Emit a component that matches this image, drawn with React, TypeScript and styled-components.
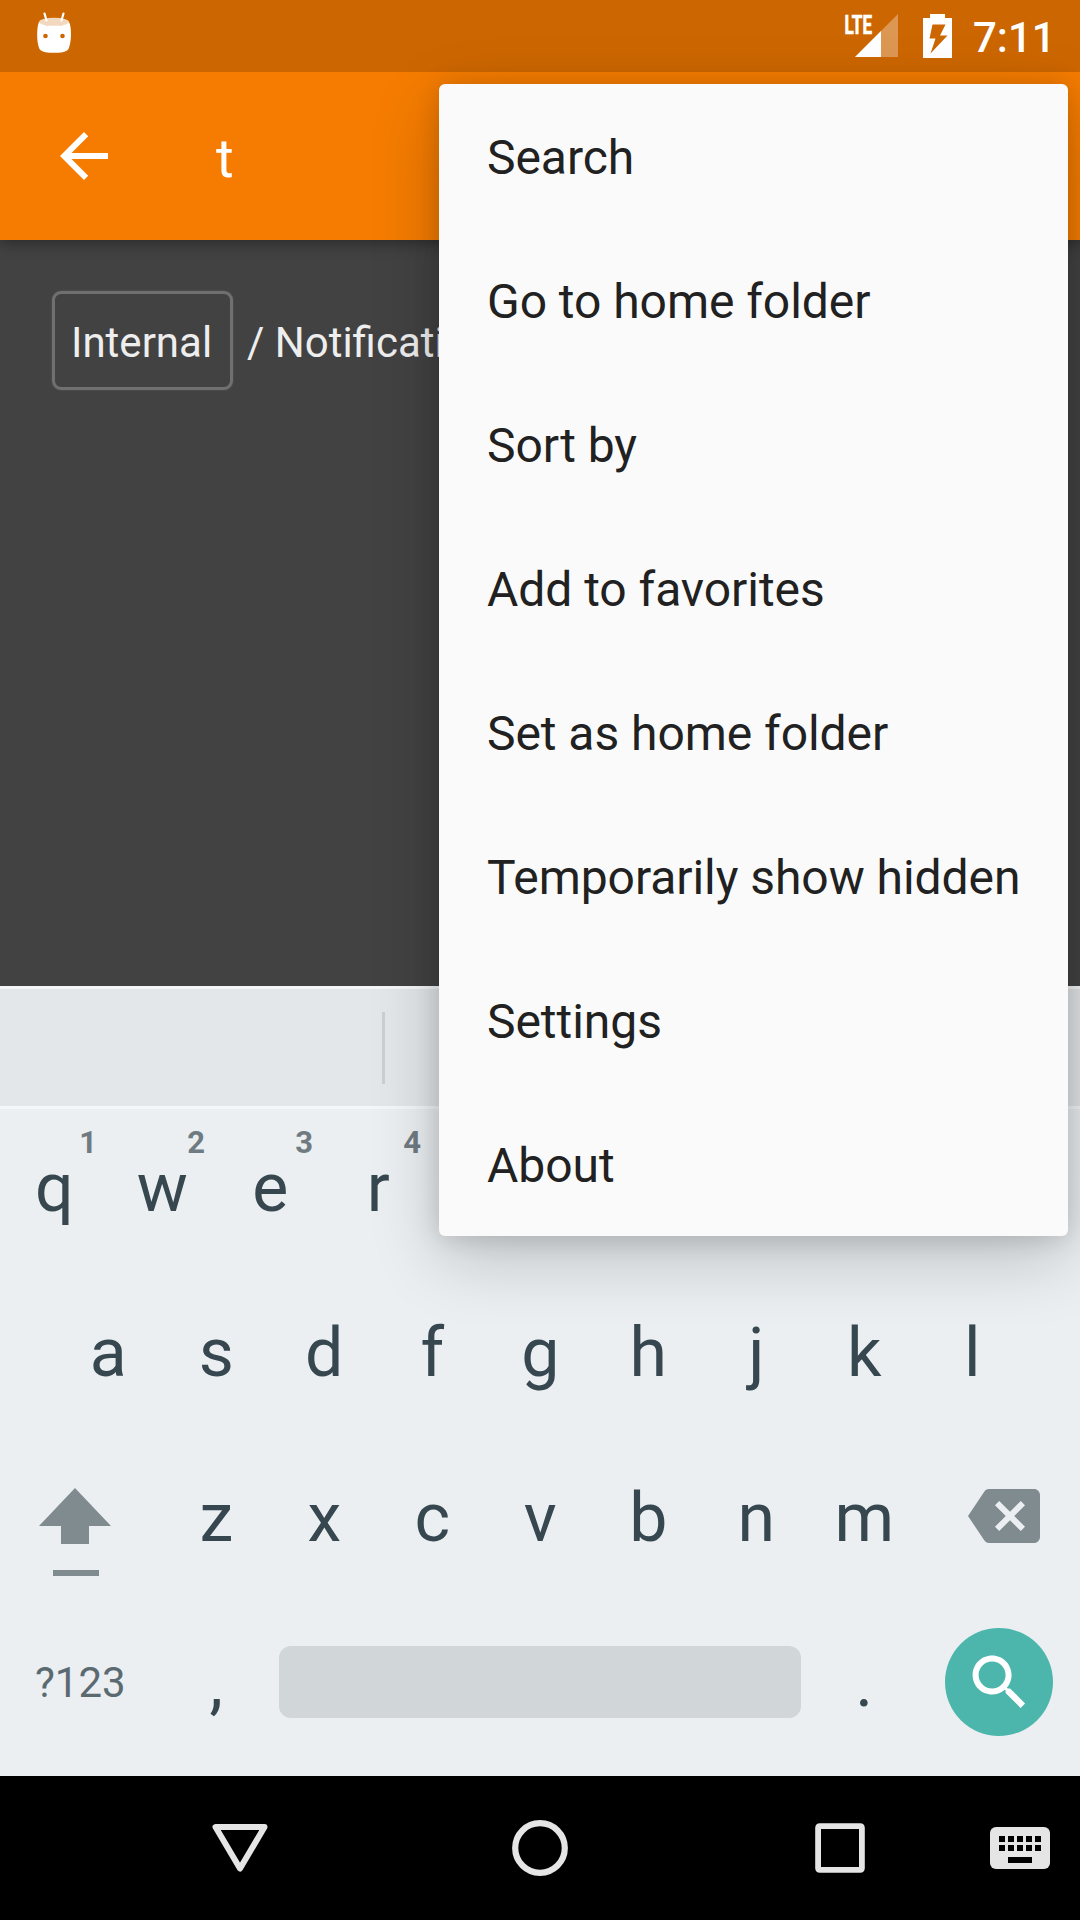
import React from "react";
import styled, { createGlobalStyle } from "styled-components";

const GlobalStyle = createGlobalStyle`
  *, *::before, *::after { box-sizing: border-box; }
  body {
    margin: 0;
    font-family: Roboto, "Noto Sans", sans-serif;
    font-kerning: normal;
  }
  svg { display: block; flex: none; }
`;

const Screen = styled.div`
  position: relative;
  display: flex;
  flex-direction: column;
  width: 1080px;
  height: 1920px;
  overflow: hidden;
  background: #424242;
`;

const StatusBar = styled.header`
  position: relative;
  z-index: 1;
  display: flex;
  align-items: center;
  height: 72px;
  flex: none;
  padding: 0 31px 0 36px;
  background: #cc6600;
  color: #fff;
`;

const StatusIcons = styled.div`
  display: flex;
  align-items: center;
  margin-left: auto;
`;

const Clock = styled.span`
  width: 76px;
  margin-left: 21px;
  padding-top: 3px;
  font-size: 42px;
  font-weight: 500;
  line-height: 72px;
  white-space: nowrap;
`;

const Toolbar = styled.div`
  display: flex;
  align-items: center;
  height: 168px;
  flex: none;
  padding-left: 48px;
  background: #f57c00;
  box-shadow: 0 3px 14px rgba(0, 0, 0, 0.38);
`;

const Query = styled.span`
  margin-left: 96px;
  padding-top: 5px;
  color: #fff;
  font-size: 54px;
  line-height: 64px;
`;

const Content = styled.main`
  flex: 1;
  min-height: 0;
  padding: 51px 0 0 52px;
  overflow: hidden;
`;

const Breadcrumbs = styled.nav`
  display: flex;
  align-items: center;
  height: 99px;
  color: #eee;
  font-size: 42px;
  line-height: 50px;
  white-space: nowrap;
`;

const Crumb = styled.span<{ $boxed?: boolean }>`
  display: flex;
  align-items: center;
  height: 99px;
  padding: ${(p) => (p.$boxed ? "4px 0 0 16px" : "4px 0 0 14px")};
  width: ${(p) => (p.$boxed ? "181px" : "auto")};
  border: ${(p) => (p.$boxed ? "3px solid #707070" : "0 solid transparent")};
  border-radius: 9px;
  box-shadow: ${(p) => (p.$boxed ? "0 0 2px rgba(255, 255, 255, 0.16)" : "none")};
`;

const Suggestions = styled.div`
  display: flex;
  align-items: center;
  height: 123px;
  flex: none;
  border-top: 3px solid #f4f6f7;
  border-bottom: 3px solid #f4f6f7;
  background: #e3e7e9;
`;

const Suggestion = styled.div`
  width: 385px;
  height: 72px;
  margin-top: 1px;
  border-right: 3px solid #cacfd1;
`;

const Keyboard = styled.section`
  display: flex;
  flex-direction: column;
  height: 667px;
  flex: none;
  background: #ebeff2;
  color: #37474f;
`;

const KeyRow = styled.div<{ $indent?: number }>`
  display: flex;
  height: 165px;
  flex: none;
  padding-left: ${(p) => p.$indent ?? 0}px;
`;

const Key = styled.div`
  position: relative;
  width: 108px;
  height: 165px;
  padding: 39px 0 0 0.6px;
  font-size: 68px;
  line-height: 80px;
  text-align: center;
`;

const Hint = styled.span`
  position: absolute;
  top: 16px;
  right: 11px;
  color: #6f7b81;
  font-size: 31px;
  font-weight: 700;
  line-height: 36px;
`;

const ShiftKey = styled.div`
  width: 162px;
  height: 165px;
  padding: 49px 0 0 39px;
`;

const DeleteKey = styled.div`
  padding: 41px 0 0 50px;
`;

const SymbolKey = styled.div`
  width: 162px;
  padding: 54px 0 0 35px;
  color: #5b6a71;
  font-size: 42px;
  line-height: 50px;
`;

const SpaceBar = styled.div`
  width: 522px;
  height: 72px;
  margin: 42px 9px 0;
  border-radius: 12px;
  background: #d1d6d9;
`;

const SearchButton = styled.div`
  display: flex;
  align-items: center;
  justify-content: center;
  width: 108px;
  height: 108px;
  margin: 24px 0 0 27px;
  border-radius: 50%;
  background: #4db6ac;
`;

const NavBar = styled.footer`
  display: flex;
  align-items: center;
  height: 144px;
  flex: none;
  padding-left: 90px;
  background: #000;
`;

const NavButton = styled.div<{ $width: number }>`
  display: flex;
  justify-content: center;
  width: ${(p) => p.$width}px;
`;

const Menu = styled.ul`
  position: absolute;
  z-index: 2;
  top: 84px;
  left: 439px;
  width: 629px;
  margin: 0;
  padding: 0;
  list-style: none;
  border-radius: 6px;
  background: #fafafa;
  box-shadow: 0 22px 70px rgba(0, 0, 0, 0.2), 0 2px 26px rgba(0, 0, 0, 0.14);
`;

const MenuItem = styled.li`
  height: 144px;
  padding: 2px 0 0 48px;
  color: #212121;
  font-size: 48px;
  line-height: 144px;
  letter-spacing: -0.05px;
  white-space: nowrap;
`;

const HeadIcon = styled.svg`
  margin-top: -5px;
`;

const BatteryIcon = styled.svg`
  margin-left: 25px;
`;

const AndroidHead = () => (
  <HeadIcon width="36" height="44" viewBox="0 0 36 44">
    <ellipse cx="18" cy="10" rx="15" ry="4.200" fill="#fff" opacity="0.75" />
    <path
      d="M3 10C5 13 11 13.800 18 13.800S31 13 33 10C36 15 35.500 31 32.500 37C30 40.500 24 40.800 18 40.800S6 40.500 3.500 37C.5 31 .5 15 3 10Z"
      fill="#fff"
    />
    <path d="M8.500 1.500 10.500 8.500M27.500 1.500 25.500 8.500" stroke="#fff" strokeWidth="2.200" strokeLinecap="round" />
    <circle cx="9.500" cy="24" r="2.300" fill="#cc6600" />
    <circle cx="26.500" cy="24" r="2.300" fill="#cc6600" />
  </HeadIcon>
);

const Signal = () => (
  <svg width="54" height="72" viewBox="0 0 54 72">
    <path d="M11 57 54 14V57Z" fill="#fff" opacity="0.32" />
    <path d="M11 57 37 31V57Z" fill="#fff" />
    <text
      x="0.500"
      y="33.500"
      fill="#fff"
      stroke="#fff"
      strokeWidth="0.700"
      fontSize="26"
      fontWeight="700"
      textLength="27.500"
      lengthAdjust="spacingAndGlyphs"
    >
      LTE
    </text>
  </svg>
);

const Battery = () => (
  <BatteryIcon width="29" height="72" viewBox="0 0 29 72">
    <path
      fillRule="evenodd"
      d="M7 14H22V18H29V58H0V18H7ZM9.500 24.500 6.500 38.500H12.500L7.500 53.500 24.500 35.500H17L22.500 24.500Z"
      fill="#fff"
    />
  </BatteryIcon>
);

const BackArrow = () => (
  <svg width="72" height="72" viewBox="0 0 24 24" fill="#fff">
    <path d="M20 11H7.830l5.590-5.590L12 4l-8 8 8 8 1.410-1.410L7.830 13H20v-2z" />
  </svg>
);

const ShiftIcon = () => (
  <svg width="72" height="88" viewBox="0 0 72 88" fill="#808b90">
    <path d="M36 0 72 38H50V56H22V38H0Z" />
    <path d="M14 82H60V88H14Z" />
  </svg>
);

const Backspace = () => (
  <svg width="72" height="72" viewBox="0 0 24 24" fill="#808b90">
    <path d="M22 3H7c-.69 0-1.230.35-1.590.88L0 12l5.410 8.110c.36.53.9.89 1.590.89h15c1.100 0 2-.9 2-2V5c0-1.100-.9-2-2-2zm-3 12.590L17.590 17 14 13.410 10.410 17 9 15.590 12.590 12 9 8.410 10.410 7 14 10.590 17.590 7 19 8.410 15.410 12 19 15.590z" />
  </svg>
);

const SearchIcon = () => (
  <svg width="72" height="72" viewBox="-0.2 -0.15 24 24" fill="#fff">
    <path d="M15.500 14h-.79l-.28-.27C15.410 12.590 16 11.110 16 9.500 16 5.910 13.090 3 9.500 3S3 5.910 3 9.500 5.910 16 9.500 16c1.610 0 3.090-.59 4.230-1.570l.27.28v.79l5 4.990L20.490 19l-4.990-5zm-6 0C7.010 14 5 11.990 5 9.500S7.010 5 9.500 5 14 7.010 14 9.500 11.990 14 9.500 14z" />
  </svg>
);

const NavBack = () => (
  <svg width="60" height="60" viewBox="0 0 60 60" fill="none">
    <path d="M5.500 9H54.500L30 50.500Z" stroke="#e5e5e5" strokeWidth="6" strokeLinejoin="round" />
  </svg>
);

const NavHome = () => (
  <svg width="60" height="60" viewBox="0 0 60 60" fill="none">
    <circle cx="30" cy="30" r="24.800" stroke="#e5e5e5" strokeWidth="6.200" />
  </svg>
);

const NavRecent = () => (
  <svg width="60" height="60" viewBox="0 0 60 60" fill="none">
    <path
      fillRule="evenodd"
      d="M10 5.200H50Q54.800 5.200 54.800 10V50Q54.800 54.800 50 54.800H10Q5.200 54.800 5.200 50V10Q5.200 5.200 10 5.200ZM11 11V49H49V11Z"
      fill="#e5e5e5"
    />
  </svg>
);

const KeyboardIcon = () => (
  <svg width="72" height="72" viewBox="0 0 24 24">
    <rect x="2" y="5" width="20" height="14" rx="2" fill="#e5e5e5" />
    {[8, 11].map((y) =>
      [5, 8, 11, 14, 17].map((x) => <rect key={`${x}-${y}`} x={x} y={y} width="2" height="2" />)
    )}
    <rect x="8" y="15" width="8" height="2" />
  </svg>
);

const topRow = [
  ["q", "1"],
  ["w", "2"],
  ["e", "3"],
  ["r", "4"],
];
const homeRow = ["a", "s", "d", "f", "g", "h", "j", "k", "l"];
const bottomRow = ["z", "x", "c", "v", "b", "n", "m"];
const menuItems = [
  "Search",
  "Go to home folder",
  "Sort by",
  "Add to favorites",
  "Set as home folder",
  "Temporarily show hidden",
  "Settings",
  "About",
];

export default function App() {
  return (
    <>
      <GlobalStyle />
      <Screen>
        <StatusBar>
          <AndroidHead />
          <StatusIcons>
            <Signal />
            <Battery />
            <Clock>7:11</Clock>
          </StatusIcons>
        </StatusBar>
        <Toolbar>
          <BackArrow />
          <Query>t</Query>
        </Toolbar>
        <Content>
          <Breadcrumbs>
            <Crumb $boxed>Internal</Crumb>
            <Crumb>/ Notifications</Crumb>
          </Breadcrumbs>
        </Content>
        <Suggestions>
          <Suggestion />
        </Suggestions>
        <Keyboard>
          <KeyRow>
            {topRow.map(([letter, digit]) => (
              <Key key={letter}>
                {letter}
                <Hint>{digit}</Hint>
              </Key>
            ))}
          </KeyRow>
          <KeyRow $indent={54}>
            {homeRow.map((letter) => (
              <Key key={letter}>{letter}</Key>
            ))}
          </KeyRow>
          <KeyRow>
            <ShiftKey>
              <ShiftIcon />
            </ShiftKey>
            {bottomRow.map((letter) => (
              <Key key={letter}>{letter}</Key>
            ))}
            <DeleteKey>
              <Backspace />
            </DeleteKey>
          </KeyRow>
          <KeyRow>
            <SymbolKey>?123</SymbolKey>
            <Key>,</Key>
            <SpaceBar />
            <Key>.</Key>
            <SearchButton>
              <SearchIcon />
            </SearchButton>
          </KeyRow>
        </Keyboard>
        <NavBar>
          <NavButton $width={300}>
            <NavBack />
          </NavButton>
          <NavButton $width={300}>
            <NavHome />
          </NavButton>
          <NavButton $width={300}>
            <NavRecent />
          </NavButton>
          <NavButton $width={60}>
            <KeyboardIcon />
          </NavButton>
        </NavBar>
        <Menu>
          {menuItems.map((label) => (
            <MenuItem key={label}>{label}</MenuItem>
          ))}
        </Menu>
      </Screen>
    </>
  );
}
